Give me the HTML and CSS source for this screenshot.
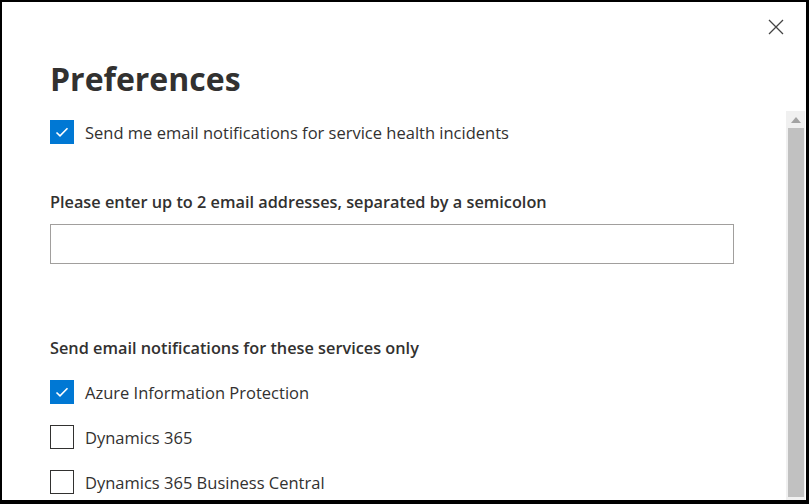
FILE: index.html
```html
<!DOCTYPE html>
<html>
<head>
<meta charset="utf-8">
<link rel="stylesheet" href="styles.css">
</head>
<body>
<div class="panel">
  <button class="close" aria-label="Close">
    <svg width="16" height="16" viewBox="0 0 16 16"><path d="M1 1L15 15M15 1L1 15" stroke="#444" stroke-width="1.3" fill="none"/></svg>
  </button>
  <h1 class="title">Preferences</h1>
  <div class="body">
    <div class="content">
      <label class="check first">
        <span class="box checked"><svg width="18" height="18" viewBox="0 0 18 18"><path d="M3.5 9.5L7 12.8L14.5 5.2" stroke="#fff" stroke-width="1.6" fill="none"/></svg></span>
        <span class="label">Send me email notifications for service health incidents</span>
      </label>
      <div class="field-label">Please enter up to 2 email addresses, separated by a semicolon</div>
      <div class="input"></div>
      <div class="field-label services">Send email notifications for these services only</div>
      <label class="check">
        <span class="box checked"><svg width="18" height="18" viewBox="0 0 18 18"><path d="M3.5 9.5L7 12.8L14.5 5.2" stroke="#fff" stroke-width="1.6" fill="none"/></svg></span>
        <span class="label">Azure Information Protection</span>
      </label>
      <label class="check">
        <span class="box"></span>
        <span class="label">Dynamics 365</span>
      </label>
      <label class="check">
        <span class="box"></span>
        <span class="label">Dynamics 365 Business Central</span>
      </label>
    </div>
    <div class="scrollbar">
      <div class="arrow"><svg width="10" height="6" viewBox="0 0 10 6"><path d="M0 6L5 0L10 6Z" fill="#a3a3a3"/></svg></div>
      <div class="thumb"></div>
    </div>
  </div>
</div>
</body>
</html>
```
FILE: styles.css
```css
* { box-sizing: border-box; }
html, body { margin: 0; height: 100%; }
body {
  background: #000;
  padding: 2px 3px 4px 2px;
  font-family: "Open Sans", "Noto Sans", sans-serif;
  color: #323130;
  overflow: hidden;
}
.panel {
  position: relative;
  background: #fff;
  height: 100%;
  display: flex;
  flex-direction: column;
  overflow: hidden;
}
.close {
  position: absolute;
  top: 17px;
  right: 22px;
  background: none;
  border: 0;
  padding: 0;
  width: 16px;
  height: 16px;
}
.title {
  margin: 57px 0 0 48px;
  font-size: 32px;
  line-height: 40px;
  font-weight: 700;
  color: #323130;
}
.body {
  flex: 1;
  display: flex;
  margin-top: 12px;
  min-height: 0;
}
.content {
  flex: 1;
  padding-left: 48px;
  padding-top: 9px;
}
.check {
  display: flex;
  align-items: center;
  gap: 11px;
  height: 24px;
  margin-bottom: 21px;
  font-size: 16.5px;
}
.check.first { margin-bottom: 0; }
.box {
  width: 24px;
  height: 24px;
  border: 1px solid #323130;
  display: flex;
  align-items: center;
  justify-content: center;
  flex: none;
}
.box.checked {
  background: #0078d4;
  border-color: #0078d4;
}
.label { color: #323130; }
.field-label {
  font-size: 16.3px;
  font-weight: 600;
  margin-top: 46px;
  line-height: 24px;
}
.services { margin-top: 72px; margin-bottom: 20px; }
.input {
  margin-top: 10px;
  width: 684px;
  height: 40px;
  border: 1px solid #a19f9d;
}
.scrollbar {
  width: 19px;
  margin-right: 1px;
  background: #f0f0f0;
  display: flex;
  flex-direction: column;
  padding: 0 1px 3px 2px;
}
.arrow {
  height: 17px;
  display: flex;
  align-items: center;
  justify-content: center;
}
.thumb {
  flex: 1;
  background: #c1c1c1;
}
```
